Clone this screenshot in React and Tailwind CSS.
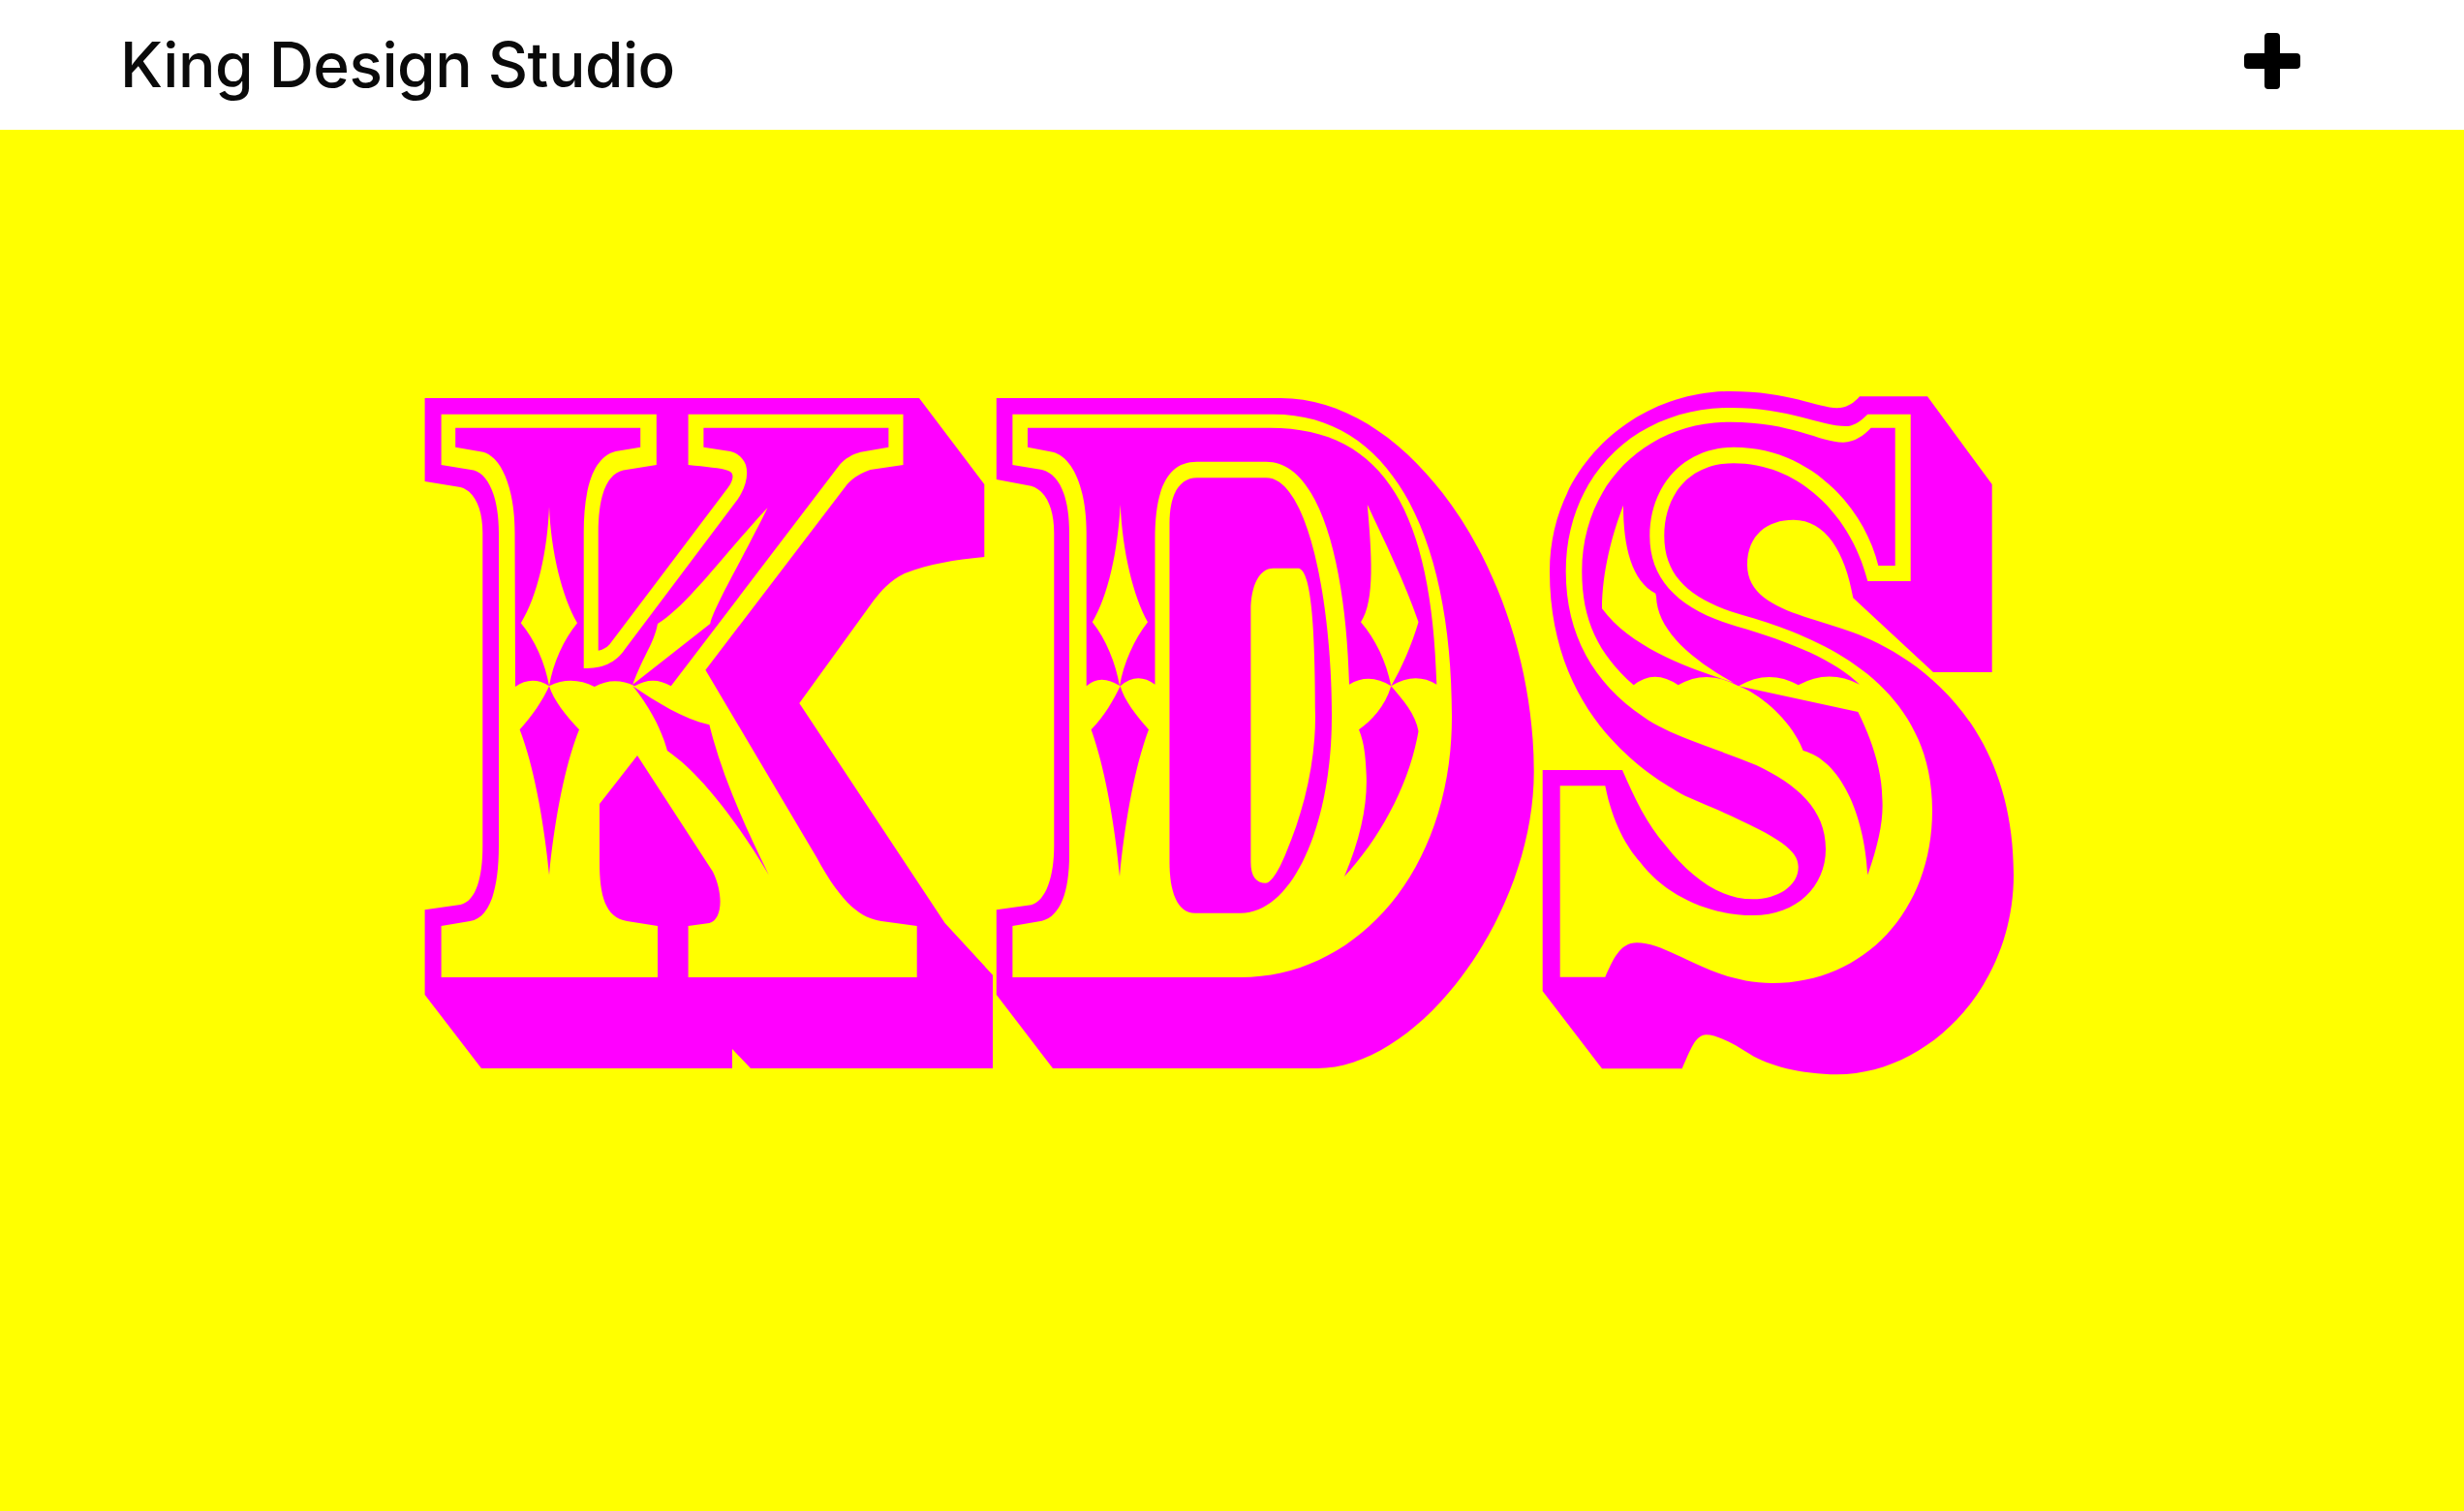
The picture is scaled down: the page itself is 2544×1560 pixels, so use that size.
import React from 'react';

const MAGENTA = 'fill-[#ff00ff]';
const YELLOW = 'fill-[#ffff00]';

// one letter of the logo: shadow silhouette, face, inner fill, ornaments
const Layer = ({ d, className }) => <path d={d} className={className} />;

const LetterK = () => (
  <g>
    <Layer className={MAGENTA} d="M438.6,411 L949,411 L1016.3,500 L1016.3,575 C985,578 960,582 934,592 C918,600 910,610 902,620 L825.3,726 L975.6,953 L1025,1006.7 L1025,1103 L775,1103 L756,1083 L756,1103 L497,1103 L438.6,1027 L438.6,939.3 L475.4,934 C492,930 498.3,905 498.3,873 L498.3,550 C498.3,525 490,507 475.4,503 L438.6,497 Z" />
    <Layer className={YELLOW} d="M455.6,427.7 L677.8,427.7 L677.8,480 L643.4,485.5 C625,490 617.7,515 617.7,550 L617.7,671.7 C622,671 626,669 629.6,665 L752,503 C758,494 758,488 752,486 C745,483 728,482 710.6,480 L710.6,427.7 L932.5,427.7 L932.5,480 L898.5,485 C890,488 882,492 874.7,500 L728.4,691.7 L843,885 C870,935 890,948 910,951 L946.7,956 L946.7,1009 L710.6,1009 L710.6,956 L732.4,953 C745,950 748,925 736,900 L658,780 L619,830 L619,890 C619,925 625,947 647.4,951 L679,956 L679,1009 L455.6,1009 L455.6,956 L485.2,951 C505,948 515,920 515,873 L515,550 C515,515 505,490 489.2,485.5 L455.6,480 Z" />
    <Layer className={MAGENTA} d="M470.2,441.7 L661.2,441.7 L661.2,461.7 L635.5,466 C612,472 602.7,505 602.7,550 L602.7,690 C622,690 635,685 645.4,670 L762,515 C770,503 773,490 770,480 C767,472 760,467 754,466 L726.4,461.7 L726.4,441.7 L917.4,441.7 L917.4,461.7 L888.6,466.7 C880,469 873,473 866.8,480 L692.8,708.3 Q674,697 655.3,708.3 Q634,698 613.8,709 Q590,697 567,708.3 Q549,697 532,709 L531.5,550 C531.5,505 518,472 499,466.7 L470.2,461.7 Z" />
    <Layer className={YELLOW} d="M567,523.3 C565,570 555,615 537.8,643.3 C552,660 563,685 567,708.3 C571,685 582,660 596,643.3 C580,615 569,570 567,523.3 Z" />
    <Layer className={YELLOW} d="M792.5,524.3 C765,580 738,625 733.2,644 L653.3,706.7 C665,675 675,665 679,644 C710,625 745,575 792.5,524.3 Z" />
    <Layer className={MAGENTA} d="M567,708.3 C571,722 585,740 598,753.3 C583,790 572,850 567,903.3 C562,850 551,790 536.6,753.3 C549,740 561,722 567,708.3 Z" />
    <Layer className={MAGENTA} d="M653.3,708.3 C678,725 705,742 732.4,748.3 C745,800 770,855 793.7,903.3 C762,850 725,800 688.9,775 C685,760 675,735 653.3,708.3 Z" />
  </g>
);

const LetterD = () => (
  <g>
    <Layer className={MAGENTA} d="M1028.8,411 L1322.3,411 C1460,411 1583.7,600 1583.7,796.7 C1583.7,945 1465,1103 1360,1103 L1087,1103 L1028.8,1027 L1028.8,939.3 L1064.6,934.3 C1080,930 1088.3,905 1088.3,873 L1088.3,550 C1088.3,525 1080,506 1064.6,501.7 L1028.8,495 Z" />
    <Layer className={YELLOW} d="M1045.4,427.7 L1314.7,427.7 C1440,427.7 1499,560 1499,740 C1499,900 1400,1009 1281,1009 L1045.4,1009 L1045.4,956 L1075.8,950.7 C1095,946 1104,920 1104,883 L1104,550 C1104,515 1095,490 1075.8,485 L1045.4,480 Z" />
    <Layer className={MAGENTA} d="M1061,441.7 L1311,441.7 C1430,441.7 1478,530 1483.3,706.7 Q1461,693 1436.3,708.3 Q1414,694 1393,706.7 C1390,590 1365,476.7 1307.2,476.7 L1235.7,476.7 C1205,476.7 1192.5,505 1192.5,557 L1192.5,706.7 Q1174,693 1156.7,708.3 Q1136,695 1121.7,708.3 L1121.7,550 C1121.7,505 1108,472 1087,466.7 L1061,461.7 Z" />
    <Layer className={MAGENTA} d="M1207.5,540 C1207.5,510 1218,493.3 1235.7,493.3 L1307.2,493.3 C1350,493.3 1375,620 1375,740 C1375,850 1335,942.7 1281,942.7 L1233.9,942.7 C1215,942.7 1207.5,920 1207.5,890 Z" />
    <Layer className={YELLOW} d="M1314.7,586.7 L1341,586.7 C1352,590 1358,630 1358,740 C1358,790 1345,840 1328,880 C1320,900 1312,911.7 1307,911.7 C1297,911.7 1291.4,905 1291.4,890 L1291.4,630 C1291.4,605 1300,586.7 1314.7,586.7 Z" />
    <Layer className={YELLOW} d="M1156.7,521 C1154,570 1144,615 1127.8,642.3 C1142,660 1152,685 1156,708.3 C1160,685 1171,660 1185,642.3 C1170,615 1159,570 1156.7,521 Z" />
    <Layer className={YELLOW} d="M1411.8,521 C1416,570 1420,620 1405,642.3 C1420,660 1431,682 1436.3,708.3 C1447,690 1458,665 1464.5,642.3 C1450,600 1430,560 1411.8,521 Z" />
    <Layer className={MAGENTA} d="M1156.7,708.3 C1160,722 1174,740 1186,753.3 C1172,790 1161,850 1156,905 C1151,850 1140,790 1126.6,753.3 C1140,740 1150,722 1156.7,708.3 Z" />
    <Layer className={MAGENTA} d="M1436.3,708.3 C1448,722 1462,738 1464.5,755 C1455,810 1425,865 1388,905 C1405,865 1412,830 1410.7,800 C1410,780 1408,765 1403,753.3 C1415,745 1430,730 1436.3,708.3 Z" />
  </g>
);

const LetterS = () => (
  <g>
    <Layer className={MAGENTA} d="M1920,409.3 L1990,409.3 L2056.7,500 L2056.7,694 L1996,694 L1913.3,617.3 C1905,570 1885,536.7 1851.7,536.7 C1825,536.7 1804,552 1804,583.3 C1804,612 1830,626 1863,636.7 C1880,642 1897,647 1913.3,653 C1965,672 2079,735 2079,903.3 C2079,1020 1990,1109.3 1896.7,1109.3 C1860,1109.3 1825,1100 1806.7,1088.3 C1790,1077 1772,1068.3 1761.7,1068.3 C1750,1068.3 1745,1085 1736.7,1103.3 L1654,1103.3 L1592.7,1023.3 L1592.7,795 L1675,795 C1688,825 1700,850 1720,873.3 C1745,905 1775,928.3 1810,928.3 C1835,928.3 1856.7,915 1856.7,895 C1856.7,875 1830,860 1740,821.7 C1690,795 1600,730 1600,590 C1600,480 1690,404 1786.7,404 C1850,404 1880,423 1900,421 C1908,420 1914,416 1920,409.3 Z" />
    <Layer className={YELLOW} d="M1928.3,427.7 L1972.7,427.7 L1972.7,600 L1928.3,600 C1912,535 1860,478.3 1790,478.3 C1745,478.3 1718.3,510 1718.3,553.3 C1718.3,595 1745,618 1793.3,633.3 C1870,655 1995,700 1995,836.7 C1995,940 1925,1015 1830,1015 C1765,1015 1725,973.3 1690,973.3 C1672,973.3 1665,992 1657.3,1008.7 L1610.7,1008.7 L1610.7,811.3 L1657.3,811.3 C1665,850 1680,875 1693.3,890 C1720,925 1765,945 1810,945 C1855,945 1885,915 1885,876.7 C1885,835 1855,810 1813.3,790 C1770,772 1725,760 1696.7,740 C1645,705 1616.7,655 1616.7,590 C1616.7,490 1690,421 1786.7,421 C1850,421 1880,441 1908.3,440 C1915,439 1922,434 1928.3,427.7 Z" />
    <Layer className={MAGENTA} d="M1931.7,441.7 L1956.7,441.7 L1956.7,584 L1939.3,584 C1925,525 1870,461.7 1790,461.7 C1740,461.7 1703.3,500 1703.3,553.3 C1703.3,600 1735,630 1793.3,646.7 C1850,663 1895,682 1920,706.7 Q1888,690 1856.7,707.3 Q1826,690 1795,708.3 Q1762,690 1732.7,707.3 Q1708,690 1686.7,707.3 C1650,675 1633.3,640 1633.3,590 C1633.3,500 1700,435.7 1786.7,435.7 C1850,435.7 1880,457 1903.3,456.7 C1915,456 1924,450 1931.7,441.7 Z" />
    <Layer className={YELLOW} d="M1676,521.7 C1676,565 1685,600 1709.3,612.7 L1710,616 C1711,650 1745,680 1790,705 C1745,690 1685,670 1654,628.3 C1654,590 1665,550 1676,521.7 Z" />
    <Layer className={MAGENTA} d="M1795,708.3 C1820,718 1850,745 1861.7,775 C1900,785 1925,840 1928.3,903.3 C1940,870 1945,845 1943.3,823.3 C1943,795 1932,762 1918.3,735 Z" />
  </g>
);

// the "+" menu button in the header
const PlusIcon = () => (
  <svg viewBox="0 0 58 58" className="w-[58px] h-[58px] fill-black">
    <rect x="21" y="0" width="16" height="58" rx="4" />
    <rect x="0" y="21" width="58" height="16" rx="4" />
  </svg>
);

export default function App() {
  return (
    <div className="w-full min-h-[1560px] flex flex-col bg-[#ffff00]">
      <header className="h-[134px] bg-white flex items-center justify-between pl-[124px] pr-[169px]">
        <h1 className="text-[64px] leading-none font-medium text-[#0a0a0a] tracking-[-0.5px] font-['Inter',sans-serif]">
          King Design Studio
        </h1>
        <button className="block mb-[8px]">
          <PlusIcon />
        </button>
      </header>

      <main className="flex-1 pt-[266px] pl-[430px]">
        <svg
          role="img"
          aria-label="KDS"
          viewBox="430 400 1660 720"
          className="block w-[1660px] h-[720px]"
        >
          <LetterK />
          <LetterD />
          <LetterS />
        </svg>
      </main>
    </div>
  );
}
